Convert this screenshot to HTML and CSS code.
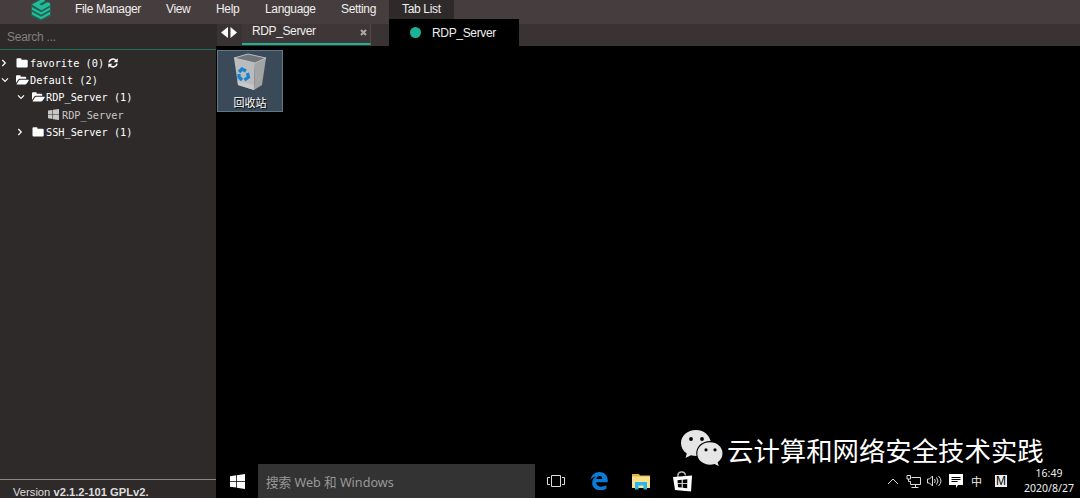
FILE: index.html
```html
<!DOCTYPE html>
<html lang="zh">
<head>
    <meta charset="utf-8">
    <title>RDP_Server</title>
    <link rel="stylesheet" href="styles.css">
</head>
<body>
    <svg width="0" height="0" class="defs">
        <symbol id="folder" viewBox="0 0 12 10"><path d="M0 1.3Q0 .3 1 .3h3q1 0 1 1v.5h5.2q1 0 1 1V8.4q0 1-1 1H1q-1 0-1-1z"/></symbol>
        <symbol id="folder-open" viewBox="0 0 13 10"><path d="M0 8V1.3Q0 .3 1 .3h2.8q1 0 1 1v.5h4.4q1 0 1 1v1H4q-1 0-1.7.8zM.6 9.2l2.3-3.7q.5-.8 1.3-.8h8.1q.8 0 .4.7l-2 3.2q-.5.8-1.3.8H.9q-.6 0-.3-.2z"/></symbol>
        <symbol id="windows" viewBox="0 0 14 14"><path d="M0 2l5.7-.8v5.4H0zM6.4 1.1L14 0v6.6H6.4zM0 7.3h5.7v5.4L0 11.9zM6.4 7.3H14V14l-7.6-1.1z"/></symbol>
        <symbol id="chevron" viewBox="0 0 6 8"><path d="M1.3 1l3 3-3 3" fill="none" stroke="currentColor" stroke-width="1.2"/></symbol>
        <symbol id="chevron-down" viewBox="0 0 8 6"><path d="M1 1.3l3 3 3-3" fill="none" stroke="currentColor" stroke-width="1.2"/></symbol>
    </svg>

    <div class="navbar">
        <svg class="logo" viewBox="0 0 22 22">
            <path class="logo-bg" d="M11 0l10 5v12l-10 4.8L1 17V5z"/>
            <path class="logo-mark" d="M2 5.5L12 0l3.5 1.8-6.3 3.5 2.3 1.3L18 3l2 1.2v2.4l-8.6 4.6z"/>
            <path class="logo-mark" d="M2 8.2l9.2 5L20 8.2v2.6l-8.8 5L2 10.8z"/>
            <path class="logo-mark" d="M2 12.8l9.2 5 8.8-5v2.7l-8.8 4.8L2 15.5z"/>
        </svg>
        <a class="file">File Manager</a>
        <a class="view">View</a>
        <a class="help">Help</a>
        <a class="language">Language</a>
        <a class="setting">Setting</a>
        <a class="tab-list active">Tab List</a>
        <div class="dropdown"><span class="dot"></span>RDP_Server</div>
    </div>

    <div class="page">
        <div class="sidebar">
            <div class="search">Search ...</div>
            <div class="tree">
                <div class="node"><svg class="arrow"><use href="#chevron"/></svg><svg class="icon"><use href="#folder"/></svg>favorite (0)
                    <svg class="refresh" viewBox="0 0 10 10"><path class="line" d="M1 4.4A4 4 0 0 1 8 2.5M9 5.6A4 4 0 0 1 2 7.5"/><path d="M9.7.2v4H5.7zM.3 9.8v-4h4z"/></svg>
                </div>
                <div class="node"><svg class="arrow down"><use href="#chevron-down"/></svg><svg class="icon"><use href="#folder-open"/></svg>Default (2)</div>
                <div class="node level2"><svg class="arrow down"><use href="#chevron-down"/></svg><svg class="icon"><use href="#folder-open"/></svg>RDP_Server (1)</div>
                <div class="node level3 leaf"><svg class="icon"><use href="#windows"/></svg>RDP_Server</div>
                <div class="node level2"><svg class="arrow"><use href="#chevron"/></svg><svg class="icon"><use href="#folder"/></svg>SSH_Server (1)</div>
            </div>
            <div class="version">Version <strong>v2.1.2-101 GPLv2.</strong></div>
        </div>

        <div class="main">
            <div class="tabs">
                <svg class="scroll" viewBox="0 0 16 11"><path d="M7 0v11L0 5.5zM9.5 0v11l6.5-5.5z"/></svg>
                <div class="tab"><span>RDP_Server</span>
                    <svg class="close" viewBox="0 0 7 7"><path d="M1 1l5 5M6 1L1 6"/></svg>
                </div>
            </div>

            <div class="desktop">
                <div class="recycle">
                    <svg viewBox="0 0 34 38">
                        <path fill="#b9bbbd" d="M1 5l21 5-1 27L5 32z"/>
                        <path fill="#a2a4a6" d="M22 10l11-5-4 27-8 5z"/>
                        <path fill="#70757a" d="M1 5l14-4 18 4-11 5z"/>
                        <path fill="#c6c8c9" d="M4.500 28l16 4 .5 5L5 32z"/>
                        <path fill="none" stroke="#d2d4d6" stroke-width=".8" d="M1 5l14-4 18 4-11 5z"/>
                        <path fill="none" stroke="#1682d5" stroke-width="3.2" d="M6 19l3-3 4 2M14.500 20l1 4-4 3M9 27l-3-3 0-3"/>
                    </svg>
                    <span>回收站</span>
                </div>
            </div>

            <div class="taskbar">
                <svg class="start" viewBox="0 0 14 14"><use href="#windows"/></svg>
                <div class="win-search">搜索 Web 和 Windows</div>
                <svg class="taskview" viewBox="0 0 18 12"><path d="M4.5.5h9v11h-9zM3 2.5H.5v7H3M15 2.5h2.5v7H15"/></svg>
                <svg class="edge" viewBox="0 0 18 18"><path d="M.5 8C1.500 2.800 5 0 9.300 0c5.500 0 8.400 4 8.400 8.200v2.100H6.200c.2 5.100 6.300 5.400 10.200 3v3.500C10 20 2.200 17.700 2.200 11c0-3 1.700-5.200 4.100-6.400C3.800 4.700 1.800 6 .5 8zm5.800-1h6c0-4.200-5.300-4-6 0z"/></svg>
                <svg class="explorer" viewBox="0 0 20 17">
                    <path fill="#e3b047" d="M1 1h7l1 1.500h10v3H1z"/>
                    <path fill="#fbe08b" d="M1 3.500h18V15H1z"/>
                    <path fill="#29b6ea" d="M4 9h12v7.500h-3.500v-4h-5v4H4z"/>
                </svg>
                <svg class="store" viewBox="0 0 20 21">
                    <path fill="none" stroke="#bbb" stroke-width="1.4" d="M5 6V4q0-2.500 3-3h1q3 0 3.500 3.500"/>
                    <path fill="#fff" d="M0 6l19-1.500-1 16L2 19z"/>
                    <path d="M4.500 9.200l4.200-.4v3.400H4.700zM9.700 8.700l4.600-.5v4H9.700zM4.800 13.100h3.900v3.500l-3.700-.4zM9.700 13.100h4.500v4.100l-4.500-.5z"/>
                </svg>
                <div class="tray">
                    <svg class="up" viewBox="0 0 12 7"><path d="M1 6l5-5 5 5"/></svg>
                    <svg class="network" viewBox="0 0 15 13"><path d="M5.500 2.500h9v7h-10v-3M9.500 9.500v3M5.500 12.500h7M1 .5h3.500v3.500H1zM2.500 4v2.500h2"/></svg>
                    <svg class="sound" viewBox="0 0 15 12"><path d="M.5 4h2l3-3v10l-3-3h-2zM7.500 4q1.500 2 0 4M9.500 2.500q3 3.500 0 7M11.500 1q5 5 0 10"/></svg>
                    <svg class="message" viewBox="0 0 14 14"><path fill="#fff" d="M0 0h14v11H9l-2 3v-3H0z"/><path class="lines" d="M2.500 3.500h9M2.500 5.500h9M2.500 7.500h6"/></svg>
                    <span class="ime">中</span>
                    <span class="mode">M</span>
                    <div class="clock">16:49<br>2020/8/27</div>
                </div>
            </div>
        </div>
    </div>

    <div class="watermark">
        <svg viewBox="0 0 42 36">
            <path d="M15 0C6.500 0 0 5.700 0 13c0 4.500 2.200 8 5.800 10.500L4.500 28l5.400-2.800c2 .5 3.600.7 5.600.7C14 17.500 20 11 29.600 11 28 4.500 22.300 0 15 0z"/>
            <path d="M41.500 23.500C41.500 17 36 12.300 29 12.300S16.300 17 16.300 23.500 22 34.700 29 34.700c1.700 0 3.200-.3 4.500-.7l4.300 2.100-1.200-3.900c3-2 4.900-5 4.900-8.700z"/>
            <g fill="#000"><circle cx="10" cy="9" r="1.9"/><circle cx="21" cy="9" r="1.9"/><circle cx="25" cy="19.800" r="1.6"/><circle cx="34" cy="19.800" r="1.6"/></g>
        </svg>
        <span>云计算和网络安全技术实践</span>
    </div>
</body>
</html>
```
FILE: styles.css
```css
* { box-sizing: border-box; }
body { margin: 0; height: 498px; overflow: hidden; display: flex; flex-direction: column; background: #000; color: #eee; font-family: "Liberation Sans", Arial, sans-serif; font-size: 12px; position: relative; }
svg { display: block; flex: none; fill: currentColor; }
.defs { position: absolute; }

.navbar { display: flex; height: 24px; background: #463e3e; position: relative; flex: none; letter-spacing: -.34px; }
.navbar a { line-height: 18px; height: 24px; white-space: nowrap; color: #f0eeee; }
.logo { width: 22px; height: 22px; margin: -1px 23px 0 30px; }
.logo-bg { fill: #285f55; }
.logo-mark { fill: #1fbd98; }
.file { width: 91px; }
.view { width: 50px; }
.help { width: 49px; }
.language { width: 76px; }
.setting { width: 48px; }
.navbar .active { width: 65px; padding-left: 13px; background: #2f2a2a; }
.dropdown { position: absolute; left: 389px; top: 19px; width: 130px; height: 27px; background: #000; display: flex; align-items: center; padding-left: 21px; z-index: 2; }
.dot { width: 11px; height: 11px; border-radius: 50%; background: #1ab394; margin-right: 11px; }

.page { display: flex; flex: 1; min-height: 0; }
.sidebar { width: 216px; background: #2f2a2a; display: flex; flex-direction: column; flex: none; }
.search { height: 26px; line-height: 26px; padding-left: 7px; color: #857f7f; border-bottom: 1px solid #1f6f5c; flex: none; letter-spacing: -.25px; }
.tree { flex: 1; padding-top: 4px; font-family: "DejaVu Sans Mono", monospace; font-size: 10.25px; color: #fff; }
.node { display: flex; align-items: center; height: 17.4px; white-space: nowrap; }
.arrow { width: 6px; height: 8px; margin: 0 9px 0 1px; }
.arrow.down { width: 8px; height: 6px; margin: 0 7px 0 1px; }
.icon { width: 13px; height: 10px; margin-right: 1px; }
.level2 { padding-left: 16px; }
.level3 { padding-left: 47px; }
.leaf { color: #c8c6c6; }
.leaf .icon { width: 13px; height: 11px; margin-right: 2px; }
.refresh { width: 10px; height: 10px; margin-left: 4px; }
.refresh .line { fill: none; stroke: currentColor; stroke-width: 1.6; }
.version { height: 19px; line-height: 24px; border-top: 1px solid #8b8787; padding-left: 13px; font-size: 11.2px; color: #ddd; white-space: nowrap; }

.main { flex: 1; display: flex; flex-direction: column; min-width: 0; }
.tabs { height: 22px; background: #3a3333; display: flex; flex: none; border-left: 1px solid #2f2a2a; }
.scroll { width: 16px; height: 11px; margin: 3px 5px 0 4px; color: #fff; }
.tab { width: 129px; height: 21px; border-bottom: 2px solid #1ab394; border-right: 1px solid #514949; padding: 0 3px 0 10px; display: flex; justify-content: space-between; line-height: 14px; background: #3f3737; letter-spacing: -.38px; }
.close { width: 7px; height: 7px; margin-top: 5px; }
.close path { stroke: #aaa; stroke-width: 2; }

.desktop { flex: 1; padding: 4px 0 0 1px; }
.recycle { width: 66px; height: 62px; border: 1px solid #607788; background: #3b4a58; display: flex; flex-direction: column; align-items: center; padding-top: 2px; }
.recycle svg { width: 34px; height: 38px; }
.recycle span { font: 11px/15px "Noto Sans CJK SC", sans-serif; margin-top: 4px; color: #fff; text-shadow: 1px 1px 1px #000; }

.taskbar { height: 34px; display: flex; align-items: center; flex: none; }
.start { width: 15px; height: 15px; margin: 0 13px 0 14px; color: #fff; }
.win-search { width: 277px; height: 34px; background: #333; color: #999; font: 12.6px/37px "Noto Sans", "Noto Sans CJK SC", sans-serif; padding-left: 8px; margin-right: 12px; }
.taskview { width: 18px; height: 12px; margin-right: 25px; }
.taskview path, .tray .up, .network, .sound { fill: none; stroke: #ddd; }
.edge { width: 18px; height: 18px; margin-right: 23px; color: #0b7bd8; }
.explorer { width: 20px; height: 17px; margin-right: 22px; }
.store { width: 20px; height: 21px; color: #000; }
.tray { margin-left: auto; display: flex; align-items: center; font-family: "Noto Sans", "Noto Sans CJK SC", sans-serif; }
.up { width: 12px; height: 7px; margin-right: 7px; }
.network { width: 15px; height: 13px; margin-right: 6px; }
.sound { width: 15px; height: 12px; margin-right: 7px; }
.message { width: 14px; height: 14px; margin-right: 8px; }
.lines { stroke: #000; }
.ime { font: 11px/14px "Noto Sans CJK SC", sans-serif; width: 24px; }
.mode { width: 12px; height: 12px; background: #eee; color: #000; font: 12px/13px "Liberation Sans", sans-serif; text-align: center; margin-right: 15px; }
.clock { width: 54px; text-align: center; font-size: 10.5px; line-height: 15px; margin-right: 4px; }

.watermark { position: absolute; left: 681px; top: 430px; display: flex; color: #e6e6e6; }
.watermark svg { width: 42px; height: 36px; margin-right: 4px; }
.watermark span { font: 26.4px/39px "Noto Sans CJK SC", sans-serif; color: #fff; white-space: nowrap; }
```
